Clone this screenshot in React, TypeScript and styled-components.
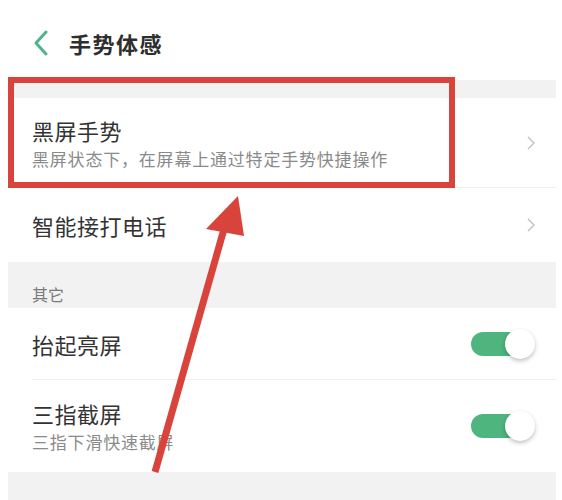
import React from "react";
import styled, { createGlobalStyle } from "styled-components";

const GlobalStyle = createGlobalStyle`
  html, body {
    margin: 0;
    padding: 0;
    background: #ffffff;
  }
  body {
    font-family: "Noto Sans CJK SC", "Noto Sans", sans-serif;
    color: #333;
  }
`;

type Item = {
  title: string;
  desc?: string;
  kind: "link" | "toggle";
  height: number;
};

const groupOne: Item[] = [
  { title: "黑屏手势", desc: "黑屏状态下，在屏幕上通过特定手势快捷操作", kind: "link", height: 90 },
  { title: "智能接打电话", kind: "link", height: 74 },
];

const groupTwo: Item[] = [
  { title: "抬起亮屏", kind: "toggle", height: 72 },
  { title: "三指截屏", desc: "三指下滑快速截屏", kind: "toggle", height: 92 },
];

const App = () => {
  return (
    <>
      <GlobalStyle />
      <Page>
        <Screen>
          <Header>
            <svg width="16" height="26" viewBox="0 0 16 26">
              <polyline
                points="13,2 3,13 13,24"
                fill="none"
                stroke="#4fb48a"
                strokeWidth="3"
                strokeLinecap="round"
                strokeLinejoin="round"
              />
            </svg>
            <Title>手势体感</Title>
          </Header>
          <Gap $h={18} />
          {groupOne.map((it, i) => (
            <Row key={it.title} $h={it.height} $line={i < groupOne.length - 1}>
              <Texts>
                <Label>{it.title}</Label>
                {it.desc && <Desc>{it.desc}</Desc>}
              </Texts>
              <Chevron />
            </Row>
          ))}
          <Section>其它</Section>
          {groupTwo.map((it, i) => (
            <Row key={it.title} $h={it.height} $line={i < groupTwo.length - 1}>
              <Texts>
                <Label>{it.title}</Label>
                {it.desc && <Desc>{it.desc}</Desc>}
              </Texts>
              <Toggle>
                <Knob />
              </Toggle>
            </Row>
          ))}
          <Gap $h={40} />
        </Screen>
        <Highlight />
        <Arrow width="562" height="500" viewBox="0 0 562 500">
          <line x1="155" y1="472" x2="226" y2="222" stroke="#d8433c" strokeWidth="7" />
          <polygon points="238,196 206,229 244,236" fill="#d8433c" />
        </Arrow>
      </Page>
    </>
  );
};

const Chevron = () => (
  <svg width="10" height="16" viewBox="0 0 10 16">
    <polyline points="2,2 8,8 2,14" fill="none" stroke="#bdbdbd" strokeWidth="1.3" />
  </svg>
);

export default App;

const Page = styled.div`
  position: relative;
  width: 562px;
  height: 500px;
  overflow: hidden;
`;

const Screen = styled.div`
  margin-left: 8px;
  width: 548px;
  background: #ffffff;
`;

const Header = styled.div`
  height: 80px;
  display: flex;
  align-items: center;
  padding-left: 25px;
  gap: 20px;
  padding-top: 6px;
  box-sizing: border-box;
`;

const Title = styled.div`
  font-size: 22px;
  font-weight: 700;
  color: #2e2e2e;
  letter-spacing: 1.5px;
`;

const Gap = styled.div<{ $h: number }>`
  height: ${(p) => p.$h}px;
  background: #f2f2f2;
`;

const Row = styled.div<{ $h: number; $line: boolean }>`
  height: ${(p) => p.$h}px;
  display: flex;
  align-items: center;
  justify-content: space-between;
  padding: 0 20px 0 24px;
  box-sizing: border-box;
  position: relative;
  &::after {
    content: "";
    display: ${(p) => (p.$line ? "block" : "none")};
    position: absolute;
    left: 24px;
    right: 0;
    bottom: 0;
    height: 1px;
    background: #f0f0f0;
  }
`;

const Texts = styled.div`
  display: flex;
  flex-direction: column;
  gap: 4px;
`;

const Label = styled.div`
  font-size: 22px;
  color: #333;
  line-height: 28px;
  letter-spacing: 0.5px;
`;

const Desc = styled.div`
  font-size: 17px;
  color: #8a8a8a;
  line-height: 22px;
  letter-spacing: 0.8px;
`;

const Section = styled.div`
  height: 46px;
  background: #f2f2f2;
  padding: 20px 0 0 24px;
  box-sizing: border-box;
  font-size: 16px;
  color: #7a7a7a;
`;

const Toggle = styled.div`
  position: relative;
  width: 50px;
  height: 24px;
  border-radius: 12px;
  background: #4db57d;
  margin-right: 15px;
`;

const Knob = styled.div`
  position: absolute;
  right: -14px;
  top: -3px;
  width: 30px;
  height: 30px;
  border-radius: 50%;
  background: #ffffff;
  box-shadow: 0 2px 4px rgba(0, 0, 0, 0.25);
`;

const Highlight = styled.div`
  position: absolute;
  left: 8px;
  top: 77px;
  width: 447px;
  height: 111px;
  border: 6px solid #d8433c;
  box-sizing: border-box;
`;

const Arrow = styled.svg`
  position: absolute;
  left: 0;
  top: 0;
  pointer-events: none;
`;
